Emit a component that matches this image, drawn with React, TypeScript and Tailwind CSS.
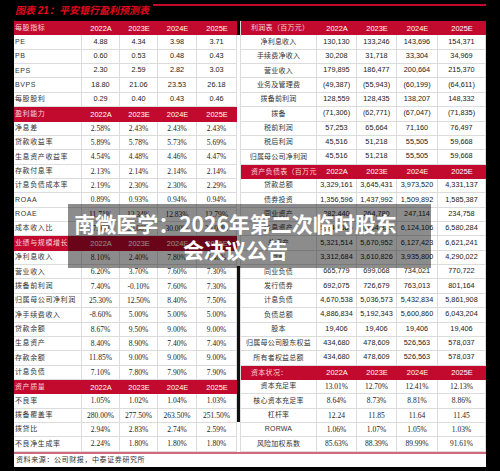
import React from "react";

type Row = [string, string[]];

interface Section {
  head: string;
  serif?: boolean;
  rows: Row[];
}

const years = ["2022A", "2023E", "2024E", "2025E"];

const leftSections: Section[] = [
  {
    head: "每股指标",
    rows: [
      ["PE", ["4.88", "4.34", "3.98", "3.71"]],
      ["PB", ["0.60", "0.53", "0.48", "0.43"]],
      ["EPS", ["2.30", "2.59", "2.82", "3.03"]],
      ["BVPS", ["18.80", "21.06", "23.53", "26.18"]],
      ["每股股利", ["0.29", "0.40", "0.43", "0.46"]],
    ],
  },
  {
    head: "盈利能力",
    serif: true,
    rows: [
      ["净息差", ["2.58%", "2.43%", "2.43%", "2.43%"]],
      ["贷款收益率", ["5.89%", "5.78%", "5.73%", "5.69%"]],
      ["生息资产收益率", ["4.54%", "4.48%", "4.46%", "4.47%"]],
      ["存款付息率", ["2.13%", "2.14%", "2.14%", "2.14%"]],
      ["计息负债成本率", ["2.19%", "2.30%", "2.30%", "2.29%"]],
      ["ROAA", ["0.89%", "0.93%", "0.94%", "0.94%"]],
      ["ROAE", ["11.71%", "12.34%", "12.83%", "12.79%"]],
      ["成本收入比", ["27.90%", "30.00%", "30.00%", "30.00%"]],
    ],
  },
  {
    head: "业绩与规模增长",
    serif: true,
    rows: [
      ["净利息收入", ["8.10%", "2.40%", "7.80%", "7.40%"]],
      ["营业收入", ["6.20%", "3.70%", "7.60%", "7.30%"]],
      ["拨备前利润", ["7.40%", "-0.10%", "7.60%", "7.30%"]],
      ["归属母公司净利润", ["25.30%", "12.50%", "8.40%", "7.50%"]],
      ["净手续费收入", ["-8.60%", "5.00%", "5.00%", "5.00%"]],
      ["贷款余额", ["8.67%", "9.50%", "9.00%", "9.00%"]],
      ["生息资产", ["8.40%", "8.90%", "7.40%", "7.40%"]],
      ["存款余额", ["11.85%", "9.00%", "9.00%", "9.00%"]],
      ["计息负债", ["7.10%", "7.80%", "7.90%", "7.90%"]],
    ],
  },
  {
    head: "资产质量",
    serif: true,
    rows: [
      ["不良率", ["1.05%", "1.02%", "1.04%", "1.03%"]],
      ["拨备覆盖率", ["280.00%", "277.50%", "263.50%", "251.50%"]],
      ["拨贷比", ["2.94%", "2.83%", "2.74%", "2.59%"]],
      ["不良净生成率", ["2.24%", "1.80%", "1.80%", "1.80%"]],
    ],
  },
];

const rightSections: Section[] = [
  {
    head: "利润表（百万元）",
    rows: [
      ["净利息收入", ["130,130", "133,246", "143,696", "154,371"]],
      ["手续费净收入", ["30,208", "31,718", "33,304", "34,969"]],
      ["营业收入", ["179,895", "186,477", "200,664", "215,370"]],
      ["业务及管理费", ["(49,387)", "(55,943)", "(60,199)", "(64,611)"]],
      ["拨备前利润", ["128,559", "128,435", "138,207", "148,332"]],
      ["拨备", ["(71,306)", "(62,771)", "(67,047)", "(71,835)"]],
      ["税前利润", ["57,253", "65,664", "71,160", "76,497"]],
      ["税后利润", ["45,516", "51,218", "55,505", "59,668"]],
      ["归属母公司净利润", ["45,516", "51,218", "55,505", "59,668"]],
    ],
  },
  {
    head: "资产负债表（百万元）",
    rows: [
      ["贷款总额", ["3,329,161", "3,645,431", "3,973,520", "4,331,137"]],
      ["债券投资", ["1,356,596", "1,437,992", "1,509,892", "1,585,387"]],
      ["同业资产", ["282,440", "264,780", "247,114", "234,758"]],
      ["生息资产", ["5,240,685", "5,764,323", "6,124,106", "6,580,284"]],
      ["总资产", ["5,321,514", "5,670,952", "6,127,423", "6,621,241"]],
      ["存款", ["3,312,684", "3,610,826", "3,935,800", "4,290,022"]],
      ["同业负债", ["665,779", "699,068", "734,021", "770,722"]],
      ["发行债券", ["692,075", "726,679", "763,013", "801,164"]],
      ["计息负债", ["4,670,538", "5,036,573", "5,432,834", "5,861,908"]],
      ["负债总额", ["4,886,834", "5,192,343", "5,600,860", "6,043,204"]],
      ["股本", ["19,406", "19,406", "19,406", "19,406"]],
      ["归属母公司股东权益", ["434,680", "478,609", "526,563", "578,037"]],
      ["所有者权益总额", ["434,680", "478,609", "526,563", "578,037"]],
    ],
  },
  {
    head: "资本状况：",
    serif: true,
    rows: [
      ["资本充足率", ["13.01%", "12.70%", "12.41%", "12.13%"]],
      ["核心资本充足率", ["8.64%", "8.73%", "8.81%", "8.86%"]],
      ["杠杆率", ["12.24", "11.85", "11.64", "11.45"]],
      ["RORWA", ["1.06%", "1.07%", "1.05%", "1.03%"]],
      ["风险加权系数", ["85.63%", "88.39%", "89.99%", "91.61%"]],
    ],
  },
];

const sans = "font-['Liberation_Sans','Noto_Sans_CJK_SC',sans-serif]";
const serif = "font-['Liberation_Serif','Noto_Sans_CJK_SC',serif]";

const Table = ({ sections, cols, side }: { sections: Section[]; cols: string; side: "left" | "right" }) => (
  <div className={`grid ${cols} auto-rows-[14.37px] bg-white`}>
    {sections.map((sec) => (
      <React.Fragment key={sec.head}>
        <div
          className={`bg-[#c20a2f] flex items-center text-[7px] whitespace-nowrap text-[#f6d2da] ${
            side === "left" ? "pl-[1px] tracking-[0.6px]" : "pl-[10px] tracking-[0.3px]"
          }`}
        >
          {sec.head}
        </div>
        {years.map((y) => (
          <div
            key={y}
            className={`bg-[#c20a2f] flex items-center justify-center text-[7.4px] text-white ${sans}`}
          >
            {y}
          </div>
        ))}
        {sec.rows.map(([label, vals]) => (
          <React.Fragment key={label}>
            <div
              className={`flex items-center border-b border-r border-[#dcdcdc] text-[7px] text-[#333] whitespace-nowrap ${
                side === "left" ? "pl-[1px] tracking-[0.6px]" : "justify-center tracking-[0.2px]"
              }`}
            >
              {label}
            </div>
            {vals.map((v, i) => (
              <div
                key={i}
                className={`flex items-center justify-center border-b border-r border-[#dcdcdc] text-[#222] whitespace-nowrap ${
                  sec.serif ? `${serif} text-[7.5px]` : `${sans} text-[7.3px]`
                }`}
              >
                {v}
              </div>
            ))}
          </React.Fragment>
        ))}
      </React.Fragment>
    ))}
  </div>
);

export default function App() {
  return (
    <div className={`relative w-[500px] h-[471px] bg-black overflow-hidden ${sans}`}>
      {/* title band */}
      <div className="h-[21px] flex items-start pl-[15px] pr-[14px]">
        <div className="pt-[6px] text-[10px] leading-[10px] italic font-bold text-[#e2061f] whitespace-nowrap">
          图表 21：平安银行盈利预测表
        </div>
        <div className="flex-1 h-[2px] mt-[4px] ml-[4px] bg-[#c20a2f]" />
      </div>

      {/* two tables */}
      <div className="flex px-[14px]">
        <div className="w-[223px]">
          <Table sections={leftSections} cols="grid-cols-[68px_38px_38px_39px_40px]" side="left" />
        </div>
        <div className="w-[3px] flex flex-col">
          <div className="h-[14.37px] bg-black" />
          <div className="h-[231px] bg-white" />
          <div className="h-[156px] bg-[#111]" />
          <div className="flex-1 bg-white" />
        </div>
        <div className="w-[246px] border-l border-[#dcdcdc]">
          <Table sections={rightSections} cols="grid-cols-[76px_40px_40px_41px_48px]" side="right" />
        </div>
      </div>

      {/* source footer */}
      <div className="mx-[14px] h-[15px] bg-white border-t-2 border-[#d0697c] flex items-center pl-[2px] text-[7px] tracking-[0.6px] text-[#333]">
        资料来源：公司财报，中泰证券研究所
      </div>

      {/* watermark headline */}
      <div className="absolute left-[68px] top-[204px] w-[363px] h-[64px] bg-black/45 flex items-center pl-[6px] pr-[34px]">
        <p className="w-full text-center text-white font-bold text-[21px] leading-[26px] whitespace-nowrap font-['Noto_Sans_CJK_SC',sans-serif]">
          南微医学：2026年第二次临时股东
          <br />
          会决议公告
        </p>
      </div>
    </div>
  );
}
